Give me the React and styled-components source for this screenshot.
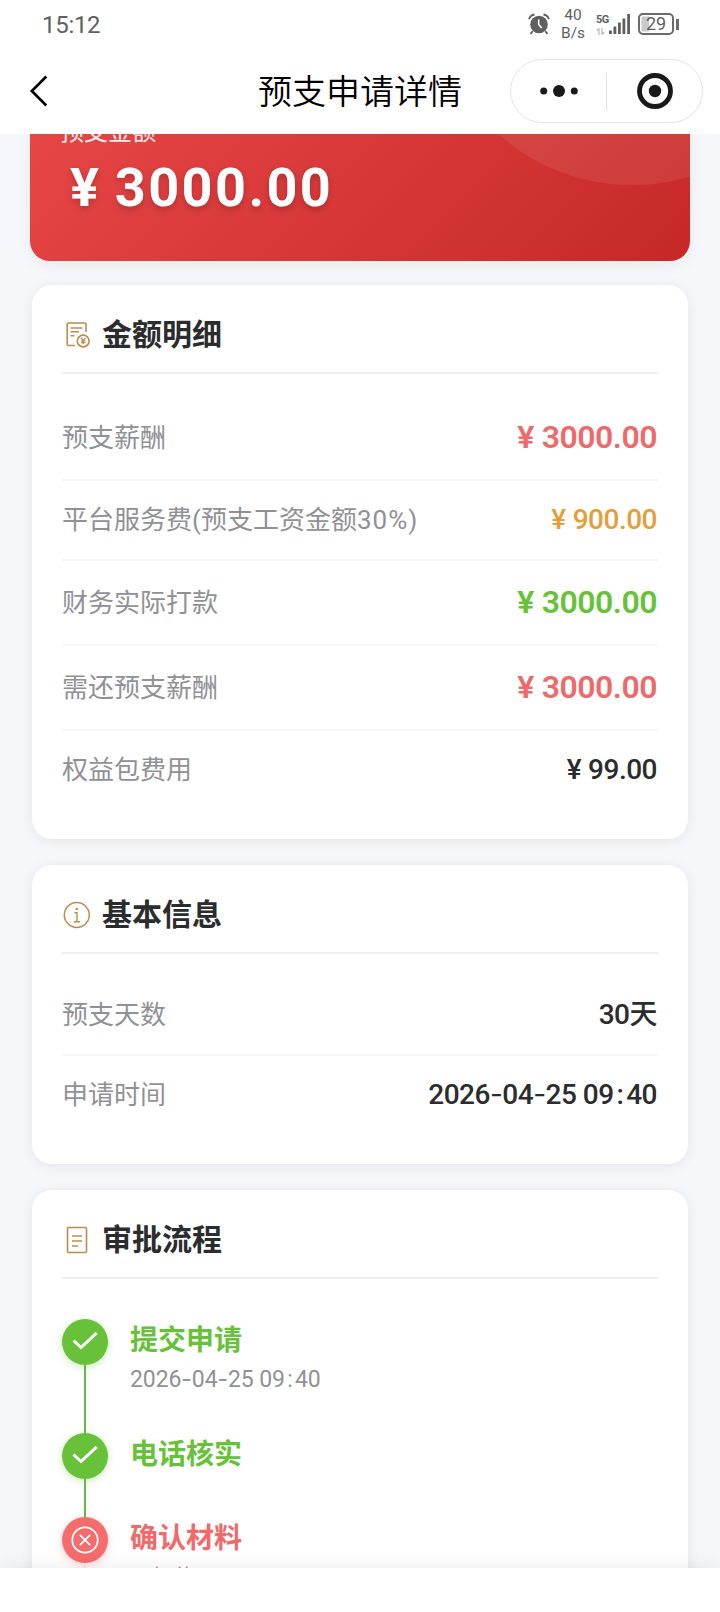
import React from "react";
import styled, { createGlobalStyle } from "styled-components";

const amounts = [
  { label: "预支薪酬", value: "3000.00", color: "#ee6a6a", big: true },
  { label: "平台服务费(预支工资金额", rate: "30%)", value: "900.00", color: "#e3a03a" },
  { label: "财务实际打款", value: "3000.00", color: "#67c23a", big: true },
  { label: "需还预支薪酬", value: "3000.00", color: "#ee6a6a", big: true },
  { label: "权益包费用", value: "99.00", color: "#2b2c2e" },
];

const DateText = ({ children }) =>
  children.split("").map((char, i) => {
    if (char === "-") return <Dash key={i}>-</Dash>;
    if (char === ":") return <Colon key={i}>:</Colon>;
    return char;
  });

const BillIcon = () => (
  <svg width="28" height="28" viewBox="0 0 28 28" fill="none" stroke="#b98d4f" strokeWidth="1.6">
    <path d="M13 24.5H6.200a1 1 0 0 1-1-1V3a1 1 0 0 1 1-1H23a1 1 0 0 1 1 1v8" />
    <path d="M8.500 7h12M8.500 10.800h8.500M8.500 14.700h4" />
    <circle cx="21.200" cy="20" r="5.900" />
    <path d="M18.900 16.800l2.300 2.800 2.300-2.800M21.200 19.600v3.600M18.900 19.800h4.600M18.900 21.600h4.600" strokeWidth="1.200" />
  </svg>
);

const InfoIcon = () => (
  <svg width="28" height="28" viewBox="0 0 28 28" fill="none" stroke="#b98d4f" strokeWidth="1.5">
    <circle cx="14.800" cy="14" r="12.500" />
    <path d="M12.400 11.700h2.600v9M12 20.700h6" strokeWidth="1.400" />
    <circle cx="14.800" cy="8" r="1.300" fill="#b98d4f" stroke="none" />
  </svg>
);

const FlowIcon = () => (
  <svg width="28" height="28" viewBox="0 0 28 28" fill="none" stroke="#b98d4f" strokeWidth="1.600">
    <rect x="5.500" y="1.500" width="19" height="25" rx="1" />
    <path d="M10 10h10M10 15h10M10 20h6" />
  </svg>
);

const Check = () => (
  <svg width="46" height="46" viewBox="0 0 46 46" fill="none" stroke="#fff" strokeWidth="3">
    <path d="M11.500 21.500l7.500 7L34.700 13.900" />
  </svg>
);

const Cross = () => (
  <svg width="46" height="46" viewBox="0 0 46 46" fill="none" stroke="#fff" strokeWidth="1.800">
    <circle cx="23" cy="23" r="12.700" />
    <path d="M17.800 17.800l10.400 10.400M28.200 17.800L17.800 28.200" />
  </svg>
);

const AlarmIcon = () => (
  <svg width="22" height="22" viewBox="0 0 22 22" fill="none" stroke="#5f5f5f">
    <circle cx="11" cy="11.500" r="8.800" fill="#5f5f5f" stroke="none" />
    <path d="M1 6.200A7 7 0 0 1 6.500 1.500M21 6.200a7 7 0 0 0-5.500-4.700M4.800 18.200l-2.300 2.600M17.200 18.200l2.300 2.600" strokeWidth="1.800" />
    <path d="M10.700 6.500v5l3 3.500" stroke="#fff" strokeWidth="1.600" />
  </svg>
);

const SignalIcon = () => (
  <svg width="23" height="22" viewBox="0 0 23 22" fill="#5f5f5f">
    <rect x="1" y="17.500" width="2.800" height="3.500" />
    <rect x="5.500" y="13.500" width="2.800" height="7.500" />
    <rect x="10" y="9.500" width="2.800" height="11.500" />
    <rect x="14.500" y="5.500" width="2.800" height="15.500" />
    <rect x="19.200" y="1" width="2.800" height="20" />
  </svg>
);

const DataArrows = () => (
  <svg width="9" height="7" viewBox="0 0 9 7" fill="none" stroke="#b5b5b5" strokeWidth="1.200">
    <path d="M3 7V.8L.6 3.200M6 0v6.200l2.400-2.400" />
  </svg>
);

const App = () => {
  return (
    <Page>
      <GlobalStyle />
      <StatusBar>
        <Clock>15:12</Clock>
        <StatusIcons>
          <AlarmIcon />
          <Speed>
            <span>40</span>
            <span>B/s</span>
          </Speed>
          <Network>
            <NetType>
              5G
              <DataArrows />
            </NetType>
            <SignalIcon />
          </Network>
          <BatteryWrap>
            <Battery>29</Battery>
            <BatteryTip />
          </BatteryWrap>
        </StatusIcons>
      </StatusBar>

      <NavBar>
        <svg width="20" height="32" viewBox="0 0 20 32" fill="none" stroke="#000" strokeWidth="2.600">
          <path d="M17.300 1.500L2.800 16l14.500 14.500" />
        </svg>
        <NavTitle>预支申请详情</NavTitle>
        <Capsule>
          <CapsuleButton>
            <svg width="38" height="12" viewBox="0 0 38 12" fill="#191919">
              <circle cx="3.700" cy="6" r="3.500" />
              <circle cx="19" cy="6" r="6" />
              <circle cx="34.300" cy="6" r="3.500" />
            </svg>
          </CapsuleButton>
          <CapsuleLine />
          <CapsuleButton>
            <svg width="36" height="36" viewBox="0 0 36 36" fill="none">
              <circle cx="18" cy="18" r="15.500" stroke="#191919" strokeWidth="4.800" />
              <circle cx="18" cy="18" r="6.200" fill="#191919" />
            </svg>
          </CapsuleButton>
        </Capsule>
      </NavBar>

      <Content>
        <Banner>
          <BannerLabel>预支金额</BannerLabel>
          <BannerAmount>
            <Yen>¥</Yen>3000.00
          </BannerAmount>
        </Banner>

        <Card>
          <CardHeader>
            <BillIcon />
            <CardTitle>金额明细</CardTitle>
          </CardHeader>
          {amounts.map((item) => (
            <Row key={item.label} $big={item.big}>
              <Label>
                {item.label}
                {item.rate && <Rate>{item.rate}</Rate>}
              </Label>
              <Value $big={item.big} $color={item.color}>
                <Yen>¥</Yen>
                {item.value}
              </Value>
            </Row>
          ))}
        </Card>

        <Card>
          <CardHeader>
            <InfoIcon />
            <CardTitle>基本信息</CardTitle>
          </CardHeader>
          <Row>
            <Label>预支天数</Label>
            <Value>30天</Value>
          </Row>
          <Row>
            <Label>申请时间</Label>
            <Value>
              <DateText>2026-04-25 09:40</DateText>
            </Value>
          </Row>
        </Card>

        <Card>
          <CardHeader>
            <FlowIcon />
            <CardTitle>审批流程</CardTitle>
          </CardHeader>
          <Steps>
            <Step $height={114}>
              <Rail>
                <Dot $color="#67c23a">
                  <Check />
                </Dot>
                <Line $color="#67b93f" />
              </Rail>
              <StepBody>
                <StepTitle $color="#67c23a">提交申请</StepTitle>
                <StepTime>
                  <DateText>2026-04-25 09:40</DateText>
                </StepTime>
              </StepBody>
            </Step>
            <Step $height={84}>
              <Rail>
                <Dot $color="#67c23a">
                  <Check />
                </Dot>
                <Line $color="#67b93f" />
              </Rail>
              <StepBody>
                <StepTitle $color="#67c23a">电话核实</StepTitle>
              </StepBody>
            </Step>
            <Step $height={114}>
              <Rail>
                <Dot $color="#f56c6c">
                  <Cross />
                </Dot>
                <Line $color="#e4e7ed" />
              </Rail>
              <StepBody>
                <StepTitle $color="#f0696b">确认材料</StepTitle>
                <StepNote>已拒绝</StepNote>
              </StepBody>
            </Step>
          </Steps>
        </Card>
      </Content>
      <Footer />
    </Page>
  );
};

export default App;

const GlobalStyle = createGlobalStyle`
  * {
    box-sizing: border-box;
  }

  body {
    margin: 0;
    background: #f5f7fb;
    font-family: Roboto, "Noto Sans CJK SC", sans-serif;
  }

  svg {
    display: block;
    flex-shrink: 0;
  }
`;

const Page = styled.div`
  width: 720px;
  height: 1612px;
  display: flex;
  flex-direction: column;
  overflow: hidden;
`;

const StatusBar = styled.div`
  height: 48px;
  flex-shrink: 0;
  padding: 0 41px 0 42px;
  display: flex;
  justify-content: space-between;
  align-items: center;
  background: #fff;
  color: #5f5f5f;
`;

const Clock = styled.div`
  padding-top: 1px;
  font-size: 24px;
  letter-spacing: -0.3px;
`;

const StatusIcons = styled.div`
  display: flex;
  align-items: center;
`;

const Speed = styled.div`
  width: 26px;
  margin-left: 10px;
  display: flex;
  flex-direction: column;
  align-items: center;
  font-size: 15.5px;
  line-height: 18px;
`;

const Network = styled.div`
  margin-left: 10px;
  display: flex;
  align-items: center;
`;

const NetType = styled.div`
  width: 12px;
  display: flex;
  flex-direction: column;
  gap: 3px;
  font-size: 11px;
  font-weight: 700;
  line-height: 11px;
  letter-spacing: -0.5px;
`;

const BatteryWrap = styled.div`
  margin-left: 7px;
  display: flex;
  align-items: center;
  gap: 2px;
`;

const Battery = styled.div`
  width: 36px;
  height: 22px;
  border: 2px solid #6b6b6b;
  border-radius: 5px;
  font-size: 18px;
  line-height: 18px;
  text-align: center;
  background: linear-gradient(90deg, #c9c9c9 9px, #fff 9px);
  box-shadow: inset 0 0 0 1.5px #fff;
`;

const BatteryTip = styled.div`
  width: 3px;
  height: 11px;
  background: #6b6b6b;
`;

const NavBar = styled.div`
  height: 86px;
  flex-shrink: 0;
  padding: 0 16px 0 29px;
  display: grid;
  grid-template-columns: 193px 1fr 193px;
  align-items: center;
  background: #fff;
`;

const NavTitle = styled.div`
  width: 204px;
  margin-left: 36px;
  padding-top: 2px;
  font-size: 34px;
  font-weight: 350;
  line-height: 48px;
  white-space: nowrap;
  color: #000;
`;

const Capsule = styled.div`
  width: 193px;
  height: 64px;
  margin-left: -1px;
  border: 1px solid #e4e4e4;
  border-radius: 32px;
  display: flex;
  align-items: center;
`;

const CapsuleButton = styled.div`
  flex: 1;
  display: flex;
  justify-content: center;
`;

const CapsuleLine = styled.div`
  width: 1px;
  height: 37px;
  background: #e2e2e2;
`;

const Content = styled.div`
  flex: 1;
  min-height: 0;
  overflow: hidden;
  padding: 0 30px;
`;

const Banner = styled.div`
  position: relative;
  height: 318px;
  margin-top: -191px;
  margin-bottom: 24px;
  padding: 0 30px 41px;
  display: flex;
  flex-direction: column;
  justify-content: flex-end;
  gap: 7px;
  border-radius: 20px;
  overflow: hidden;
  color: #fff;
  background: linear-gradient(135deg, #ef4d4d 0%, #c62828 100%);
  box-shadow: 0 4px 16px rgba(0, 0, 0, 0.06);

  &::after {
    content: "";
    position: absolute;
    top: -160px;
    right: -143px;
    width: 402px;
    height: 402px;
    border-radius: 50%;
    background: rgba(255, 255, 255, 0.08);
  }
`;

const BannerLabel = styled.div`
  font-size: 24px;
  line-height: 34px;
  opacity: 0.9;
`;

const Yen = styled.span`
  margin-right: 0.25em;
`;

const BannerAmount = styled.div`
  padding-left: 10px;
  font-size: 54px;
  font-weight: 700;
  line-height: 64px;
  letter-spacing: 2.4px;
  text-shadow: 0 3px 6px rgba(0, 0, 0, 0.2);
`;

const Card = styled.div`
  margin: 0 2px 26px;
  padding: 30px;
  border-radius: 20px;
  background: #fff;
  box-shadow: 0 2px 14px rgba(0, 0, 0, 0.08);
`;

const CardHeader = styled.div`
  height: 59px;
  margin-bottom: 22px;
  padding-bottom: 18px;
  display: flex;
  align-items: center;
  gap: 12px;
  border-bottom: 2px solid #efefef;
`;

const CardTitle = styled.div`
  font-size: 30px;
  font-weight: 600;
  line-height: 37px;
  color: #2b2c2e;
`;

const Row = styled.div`
  height: ${(props) => (props.$big ? 85 : 80)}px;
  display: flex;
  justify-content: space-between;
  align-items: center;
  border-bottom: 2px solid #f7f7f7;

  &:last-child {
    height: 78px;
    border-bottom: none;
  }
`;

const Label = styled.div`
  font-size: 26px;
  line-height: 36px;
  color: #909196;
`;

const Rate = styled.span`
  letter-spacing: 1px;
`;

const Value = styled.div`
  margin-right: 1px;
  padding-bottom: ${(props) => (props.$big ? 2 : 1)}px;
  font-size: ${(props) => (props.$big ? 32 : 28)}px;
  font-weight: ${(props) => (props.$big ? 600 : 500)};
  line-height: 38px;
  letter-spacing: -0.5px;
  white-space: pre;
  color: ${(props) => props.$color || "#2b2c2e"};
`;

const Dash = styled.span`
  font-family: Inter, sans-serif;
  font-weight: 400;
`;

const Colon = styled.span`
  padding: 0 0.1em;
`;

const Steps = styled.div`
  padding-top: 18px;
`;

const Step = styled.div`
  height: ${(props) => props.$height}px;
  display: flex;
  gap: 22px;
`;

const Rail = styled.div`
  width: 46px;
  display: flex;
  flex-direction: column;
  align-items: center;
`;

const Dot = styled.div`
  width: 46px;
  height: 46px;
  flex-shrink: 0;
  border-radius: 50%;
  background: ${(props) => props.$color};
  box-shadow: 0 2px 8px ${(props) => props.$color}55;
`;

const Line = styled.div`
  width: 2px;
  flex: 1;
  background: ${(props) => props.$color};
`;

const StepBody = styled.div`
  flex: 1;
  padding-top: 2px;
`;

const StepTitle = styled.div`
  font-size: 28px;
  font-weight: 600;
  line-height: 40px;
  color: ${(props) => props.$color};
`;

const StepTime = styled.div`
  margin-top: 2px;
  font-size: 23px;
  line-height: 32px;
  letter-spacing: -0.1px;
  color: #909196;
`;

const StepNote = styled.div`
  margin-top: 3px;
  font-size: 22px;
  line-height: 32px;
  color: #c98a8c;
`;

const Footer = styled.div`
  height: 44px;
  flex-shrink: 0;
  background: #fff;
  box-shadow: 0 -4px 16px rgba(0, 0, 0, 0.06);
  z-index: 1;
`;
